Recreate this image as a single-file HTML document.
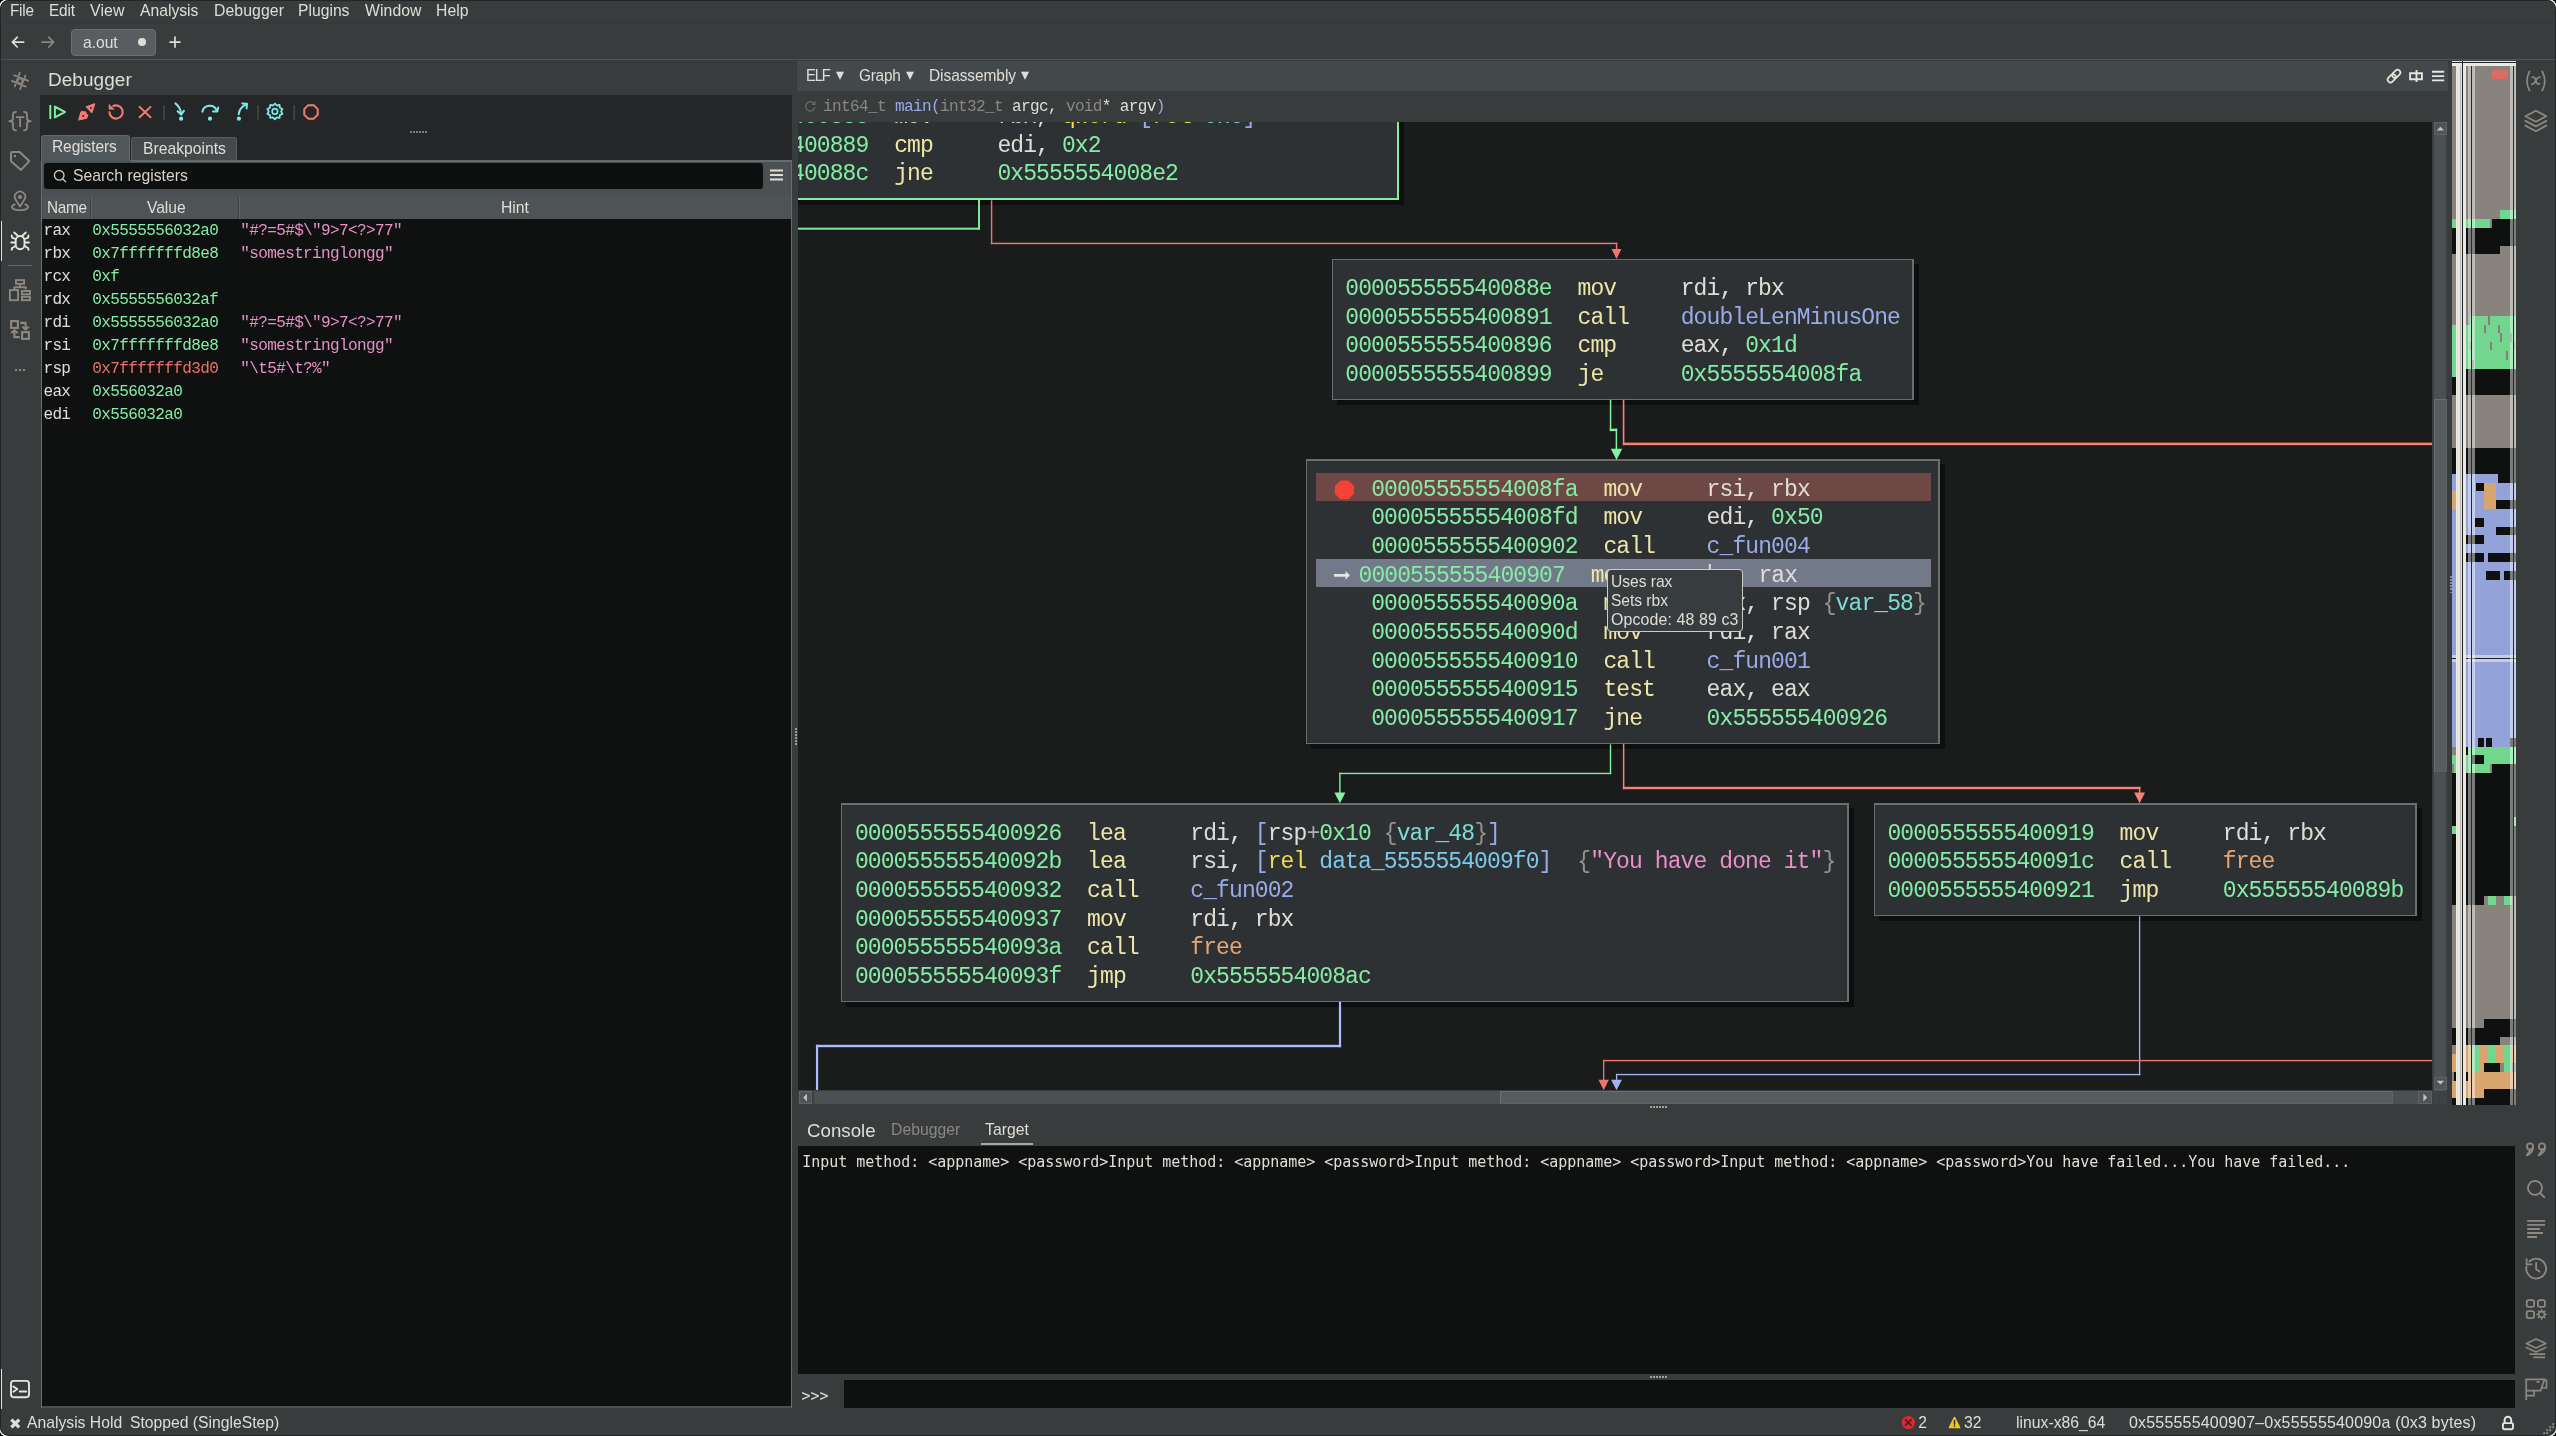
<!DOCTYPE html>
<html lang="en"><head><meta charset="utf-8"><title>Binary Ninja - a.out</title>
<style>
html,body{margin:0;padding:0;background:#000;overflow:hidden}
#app{will-change:transform;position:relative;width:2556px;height:1436px;background:#383c3d;overflow:hidden;border-radius:8.5px;box-shadow:0 0 0 1.4px #fff;font-family:"Liberation Sans",sans-serif;}
#app div{position:absolute;box-sizing:border-box}
#app svg{position:absolute;overflow:visible}
.t{white-space:pre;line-height:20px;height:20px;font-family:"Liberation Sans",sans-serif}
.m{white-space:pre;line-height:28px;height:28px;font-family:"Liberation Mono",monospace;color:#e0dcd6}
.d{letter-spacing:-0.031px;white-space:pre;line-height:28px;height:28px;font-family:"DejaVu Sans Mono","Liberation Mono",monospace;color:#e0dcd6}
</style></head><body><div id="app">

<div style="left:0px;top:22.9px;width:2556px;height:1.1px;background:#33383a;"></div>
<div style="left:0px;top:59px;width:2556px;height:1px;background:#4f5556;"></div>
<div class="t" style="left:10.30px;top:0.56px;font-size:15.7px;color:#e0dcd6;letter-spacing:-0.219px;transform:scaleX(0.9740);transform-origin:0 50%;">File</div>
<div class="t" style="left:49.00px;top:0.56px;font-size:15.7px;color:#e0dcd6;letter-spacing:-0.177px;transform:scaleX(0.9804);transform-origin:0 50%;">Edit</div>
<div class="t" style="left:90.00px;top:0.56px;font-size:15.7px;color:#e0dcd6;letter-spacing:0.125px;transform:scaleX(1.0111);transform-origin:0 50%;">View</div>
<div class="t" style="left:139.50px;top:0.56px;font-size:15.7px;color:#e0dcd6;letter-spacing:0.003px;transform:scaleX(1.0004);transform-origin:0 50%;">Analysis</div>
<div class="t" style="left:213.50px;top:0.56px;font-size:15.7px;color:#e0dcd6;letter-spacing:0.075px;transform:scaleX(1.0076);transform-origin:0 50%;">Debugger</div>
<div class="t" style="left:298.00px;top:0.56px;font-size:15.7px;color:#e0dcd6;letter-spacing:0.001px;transform:scaleX(1.0001);transform-origin:0 50%;">Plugins</div>
<div class="t" style="left:364.50px;top:0.56px;font-size:15.7px;color:#e0dcd6;letter-spacing:0.066px;transform:scaleX(1.0059);transform-origin:0 50%;">Window</div>
<div class="t" style="left:436.00px;top:0.56px;font-size:15.7px;color:#e0dcd6;letter-spacing:0.035px;transform:scaleX(1.0033);transform-origin:0 50%;">Help</div>
<svg style="left:0;top:23px" width="200" height="36" viewBox="0 23 200 36" fill="none" stroke-linecap="round" stroke-linejoin="round"><path d="M23.700 42.100H12.800M17.300 37.200L12.400 42.100l4.900 4.900" stroke="#e0dcd6" stroke-width="1.7"/><path d="M42 42.100h11.300M48.700 37.200L53.600 42.100l-4.900 4.900" stroke="#8c8781" stroke-width="1.7"/><path d="M170 42.100h10M175 37.100v10" stroke="#e0dcd6" stroke-width="1.7"/></svg>
<div style="left:71px;top:29px;width:85px;height:27px;background:#585e60;border:1px solid #6a7072;border-radius:4px;"></div>
<div class="t" style="left:83.10px;top:32.76px;font-size:15.7px;color:#e0dcd6;letter-spacing:-0.027px;transform:scaleX(0.9970);transform-origin:0 50%;">a.out</div>
<div style="left:137.5px;top:38px;width:8px;height:8px;background:#e0dcd6;border-radius:4px;"></div>
<div style="left:0px;top:221px;width:2.1px;height:40px;background:#e6e2dc;"></div>
<div style="left:8px;top:265px;width:24px;height:1px;background:#6a6864;"></div>
<div style="left:0px;top:1369px;width:2.1px;height:40px;background:#e6e2dc;"></div>
<div class="t" style="left:48.00px;top:69.85px;font-size:18.9px;color:#e0dcd6;letter-spacing:0.056px;transform:scaleX(1.0047);transform-origin:0 50%;">Debugger</div>
<div style="left:40px;top:95px;width:752.5px;height:66px;background:#242628;"></div>
<div style="left:410px;top:131px;width:2.1px;height:2.1px;background:#7c7c7a;"></div>
<div style="left:413px;top:131px;width:2.1px;height:2.1px;background:#7c7c7a;"></div>
<div style="left:416px;top:131px;width:2.1px;height:2.1px;background:#7c7c7a;"></div>
<div style="left:419px;top:131px;width:2.1px;height:2.1px;background:#7c7c7a;"></div>
<div style="left:422px;top:131px;width:2.1px;height:2.1px;background:#7c7c7a;"></div>
<div style="left:425px;top:131px;width:2.1px;height:2.1px;background:#7c7c7a;"></div>
<div style="left:41px;top:160px;width:751.2px;height:1248px;background:#4b5153;"></div>
<div style="left:42.2px;top:219px;width:748.4px;height:1187px;background:#0f1111;"></div>
<div style="left:790.7px;top:160px;width:1.5px;height:1248px;background:#686d6f;"></div>
<div style="left:130.5px;top:159.8px;width:661.7px;height:1.8px;background:#666b6d;"></div>
<div style="left:41px;top:160px;width:1.2px;height:1248px;background:#6a6f71;"></div>
<div style="left:41px;top:135px;width:89px;height:26px;background:#50575a;border:1px solid #61676a;border-bottom:none;border-radius:3px 3px 0 0;"></div>
<div style="left:130.7px;top:137px;width:106.8px;height:23px;background:#45494b;border:1px solid #585e60;border-bottom:none;border-radius:3px 3px 0 0;"></div>
<div class="t" style="left:51.80px;top:137.36px;font-size:15.7px;color:#e0dcd6;letter-spacing:-0.095px;transform:scaleX(0.9886);transform-origin:0 50%;">Registers</div>
<div class="t" style="left:143.00px;top:139.06px;font-size:15.7px;color:#e0dcd6;letter-spacing:0.005px;transform:scaleX(1.0006);transform-origin:0 50%;">Breakpoints</div>
<div style="left:43.5px;top:162.5px;width:719px;height:26px;background:#0e1010;border-radius:3px;"></div>
<svg style="left:52px;top:168px" width="16" height="16" viewBox="0 0 16 16" fill="none" stroke="#cbc7c1" stroke-width="1.35" stroke-linecap="round"><circle cx="7.2" cy="7.3" r="4.8"/><path d="M10.8 10.9L13.600 13.700"/></svg>
<div class="t" style="left:72.80px;top:165.66px;font-size:15.7px;color:#d6d2cc;letter-spacing:0.023px;transform:scaleX(1.0031);transform-origin:0 50%;">Search registers</div>
<svg style="left:770px;top:169px" width="13" height="12" viewBox="0 0 13 12" stroke="#e0dcd6" stroke-width="1.8"><path d="M0 1.5h13M0 6h13M0 10.5h13"/></svg>
<div style="left:43px;top:196px;width:747px;height:22.5px;background:#4e5456;"></div>
<div style="left:90px;top:196px;width:1px;height:22.5px;background:#3f4446;"></div>
<div style="left:91px;top:196px;width:1px;height:22.5px;background:#5d6365;"></div>
<div style="left:237.7px;top:196px;width:1px;height:22.5px;background:#3f4446;"></div>
<div style="left:238.7px;top:196px;width:1px;height:22.5px;background:#5d6365;"></div>
<div class="t" style="left:47.40px;top:197.56px;font-size:15.7px;color:#e0dcd6;letter-spacing:-0.317px;transform:scaleX(0.9773);transform-origin:0 50%;">Name</div>
<div class="t" style="left:146.50px;top:197.56px;font-size:15.7px;color:#e0dcd6;letter-spacing:-0.048px;transform:scaleX(0.9950);transform-origin:0 50%;">Value</div>
<div class="t" style="left:500.50px;top:197.56px;font-size:15.7px;color:#e0dcd6;letter-spacing:0.014px;transform:scaleX(1.0015);transform-origin:0 50%;">Hint</div>
<div class="m" style="left:43.40px;top:216.63px;font-size:16.05px;letter-spacing:-0.630px;"><span style="color:#e0dcd6">rax</span></div>
<div class="m" style="left:92.30px;top:216.63px;font-size:16.05px;letter-spacing:-0.630px;"><span style="color:#84eca4">0x5555556032a0</span></div>
<div class="m" style="left:240.20px;top:217.13px;font-size:16.05px;letter-spacing:-0.630px;"><span style="color:#e890c8">&quot;#?=5#$\&quot;9&gt;7&lt;?&gt;77&quot;</span></div>
<div class="m" style="left:43.40px;top:239.63px;font-size:16.05px;letter-spacing:-0.630px;"><span style="color:#e0dcd6">rbx</span></div>
<div class="m" style="left:92.30px;top:239.63px;font-size:16.05px;letter-spacing:-0.630px;"><span style="color:#84eca4">0x7fffffffd8e8</span></div>
<div class="m" style="left:240.20px;top:240.13px;font-size:16.05px;letter-spacing:-0.630px;"><span style="color:#e890c8">&quot;somestringlongg&quot;</span></div>
<div class="m" style="left:43.40px;top:262.63px;font-size:16.05px;letter-spacing:-0.630px;"><span style="color:#e0dcd6">rcx</span></div>
<div class="m" style="left:92.30px;top:262.63px;font-size:16.05px;letter-spacing:-0.630px;"><span style="color:#84eca4">0xf</span></div>
<div class="m" style="left:43.40px;top:285.63px;font-size:16.05px;letter-spacing:-0.630px;"><span style="color:#e0dcd6">rdx</span></div>
<div class="m" style="left:92.30px;top:285.63px;font-size:16.05px;letter-spacing:-0.630px;"><span style="color:#84eca4">0x5555556032af</span></div>
<div class="m" style="left:43.40px;top:308.63px;font-size:16.05px;letter-spacing:-0.630px;"><span style="color:#e0dcd6">rdi</span></div>
<div class="m" style="left:92.30px;top:308.63px;font-size:16.05px;letter-spacing:-0.630px;"><span style="color:#84eca4">0x5555556032a0</span></div>
<div class="m" style="left:240.20px;top:309.13px;font-size:16.05px;letter-spacing:-0.630px;"><span style="color:#e890c8">&quot;#?=5#$\&quot;9&gt;7&lt;?&gt;77&quot;</span></div>
<div class="m" style="left:43.40px;top:331.63px;font-size:16.05px;letter-spacing:-0.630px;"><span style="color:#e0dcd6">rsi</span></div>
<div class="m" style="left:92.30px;top:331.63px;font-size:16.05px;letter-spacing:-0.630px;"><span style="color:#84eca4">0x7fffffffd8e8</span></div>
<div class="m" style="left:240.20px;top:332.13px;font-size:16.05px;letter-spacing:-0.630px;"><span style="color:#e890c8">&quot;somestringlongg&quot;</span></div>
<div class="m" style="left:43.40px;top:354.63px;font-size:16.05px;letter-spacing:-0.630px;"><span style="color:#e0dcd6">rsp</span></div>
<div class="m" style="left:92.30px;top:354.63px;font-size:16.05px;letter-spacing:-0.630px;"><span style="color:#ef6f67">0x7fffffffd3d0</span></div>
<div class="m" style="left:240.20px;top:355.13px;font-size:16.05px;letter-spacing:-0.630px;"><span style="color:#e890c8">&quot;\t5#\t?%&quot;</span></div>
<div class="m" style="left:43.40px;top:377.63px;font-size:16.05px;letter-spacing:-0.630px;"><span style="color:#e0dcd6">eax</span></div>
<div class="m" style="left:92.30px;top:377.63px;font-size:16.05px;letter-spacing:-0.630px;"><span style="color:#84eca4">0x556032a0</span></div>
<div class="m" style="left:43.40px;top:400.63px;font-size:16.05px;letter-spacing:-0.630px;"><span style="color:#e0dcd6">edi</span></div>
<div class="m" style="left:92.30px;top:400.63px;font-size:16.05px;letter-spacing:-0.630px;"><span style="color:#84eca4">0x556032a0</span></div>
<div style="left:792px;top:60px;width:6px;height:1348px;background:#383c3d;"></div>
<div style="left:795px;top:728px;width:2.2px;height:2px;background:#9a9a98;"></div>
<div style="left:795px;top:731px;width:2.2px;height:2px;background:#9a9a98;"></div>
<div style="left:795px;top:734px;width:2.2px;height:2px;background:#9a9a98;"></div>
<div style="left:795px;top:737px;width:2.2px;height:2px;background:#9a9a98;"></div>
<div style="left:795px;top:740px;width:2.2px;height:2px;background:#9a9a98;"></div>
<div style="left:795px;top:743px;width:2.2px;height:2px;background:#9a9a98;"></div>
<div style="left:798px;top:121px;width:1634px;height:969px;background:#1a1c1c;"></div>
<div style="left:798px;top:121px;width:1634px;height:969px;overflow:hidden"><div style="left:-798px;top:-121px;width:2556px;height:1436px">
<div style="left:405px;top:65px;width:999px;height:140.1px;background:#0d0f0f;"></div>
<div style="left:400px;top:60px;width:999px;height:140.1px;background:#2d3133;border:2.3px solid #84eda4;"></div>
<div class="m" style="left:662.00px;top:103.28px;font-size:23.01px;letter-spacing:-0.903px;"><span style="color:#84eca4">0000555555400885</span>  <span style="color:#ede6a6">mov     </span><span style="color:#e0dcd6">rbx, </span><span style="color:#f0dc50">qword </span><span style="color:#9aaae8">[</span><span style="color:#f0dc50">rel </span><span style="color:#7cdcd6">one</span><span style="color:#9aaae8">]</span></div>
<div class="m" style="left:662.00px;top:132.08px;font-size:23.01px;letter-spacing:-0.903px;"><span style="color:#84eca4">0000555555400889</span>  <span style="color:#ede6a6">cmp     </span><span style="color:#e0dcd6">edi, </span><span style="color:#84eca4">0x2</span></div>
<div class="m" style="left:662.00px;top:160.28px;font-size:23.01px;letter-spacing:-0.903px;"><span style="color:#84eca4">000055555540088c</span>  <span style="color:#ede6a6">jne     </span><span style="color:#84eca4">0x5555554008e2</span></div>
<div style="left:1336.6px;top:263.8px;width:582.5px;height:141.3px;background:#0d0f0f;"></div>
<div style="left:1331.6px;top:258.8px;width:582.5px;height:141.3px;background:#2d3133;border:solid #6b6d6e;border-width:1.5px 2px 1.3px 1.3px;"></div>
<div class="m" style="left:1345.30px;top:274.98px;font-size:23.01px;letter-spacing:-0.903px;"><span style="color:#84eca4">000055555540088e</span>  <span style="color:#ede6a6">mov     </span><span style="color:#e0dcd6">rdi, rbx</span></div>
<div class="m" style="left:1345.30px;top:303.88px;font-size:23.01px;letter-spacing:-0.903px;"><span style="color:#84eca4">0000555555400891</span>  <span style="color:#ede6a6">call    </span><span style="color:#9aaae8">doubleLenMinusOne</span></div>
<div class="m" style="left:1345.30px;top:331.98px;font-size:23.01px;letter-spacing:-0.903px;"><span style="color:#84eca4">0000555555400896</span>  <span style="color:#ede6a6">cmp     </span><span style="color:#e0dcd6">eax, </span><span style="color:#84eca4">0x1d</span></div>
<div class="m" style="left:1345.30px;top:360.98px;font-size:23.01px;letter-spacing:-0.903px;"><span style="color:#84eca4">0000555555400899</span>  <span style="color:#ede6a6">je      </span><span style="color:#84eca4">0x5555554008fa</span></div>
<div style="left:1310.7px;top:464.1px;width:634.4px;height:285.1px;background:#0d0f0f;"></div>
<div style="left:1305.7px;top:459.1px;width:634.4px;height:285.1px;background:#2d3133;border:solid #6b6d6e;border-width:2px 2px 1.3px 1.3px;"></div>
<div style="left:1316px;top:473.1px;width:614.5px;height:27.9px;background:#6e4845;"></div>
<div style="left:1316px;top:559.1px;width:614.5px;height:27.8px;background:#727988;"></div>
<div class="m" style="left:1371.20px;top:476.08px;font-size:23.01px;letter-spacing:-0.903px;"><span style="color:#84eca4">00005555554008fa</span>  <span style="color:#ede6a6">mov     </span><span style="color:#e0dcd6">rsi, rbx</span></div>
<div class="m" style="left:1371.20px;top:504.08px;font-size:23.01px;letter-spacing:-0.903px;"><span style="color:#84eca4">00005555554008fd</span>  <span style="color:#ede6a6">mov     </span><span style="color:#e0dcd6">edi, </span><span style="color:#84eca4">0x50</span></div>
<div class="m" style="left:1371.20px;top:533.08px;font-size:23.01px;letter-spacing:-0.903px;"><span style="color:#84eca4">0000555555400902</span>  <span style="color:#ede6a6">call    </span><span style="color:#9aaae8">c_fun004</span></div>
<div class="m" style="left:1371.20px;top:590.08px;font-size:23.01px;letter-spacing:-0.903px;"><span style="color:#84eca4">000055555540090a</span>  <span style="color:#ede6a6">mov     </span><span style="color:#e0dcd6">rdx, rsp </span><span style="color:#96918a">{</span><span style="color:#7cdcd6">var_58</span><span style="color:#96918a">}</span></div>
<div class="m" style="left:1371.20px;top:619.08px;font-size:23.01px;letter-spacing:-0.903px;"><span style="color:#84eca4">000055555540090d</span>  <span style="color:#ede6a6">mov     </span><span style="color:#e0dcd6">rdi, rax</span></div>
<div class="m" style="left:1371.20px;top:648.08px;font-size:23.01px;letter-spacing:-0.903px;"><span style="color:#84eca4">0000555555400910</span>  <span style="color:#ede6a6">call    </span><span style="color:#9aaae8">c_fun001</span></div>
<div class="m" style="left:1371.20px;top:676.08px;font-size:23.01px;letter-spacing:-0.903px;"><span style="color:#84eca4">0000555555400915</span>  <span style="color:#ede6a6">test    </span><span style="color:#e0dcd6">eax, eax</span></div>
<div class="m" style="left:1371.20px;top:705.08px;font-size:23.01px;letter-spacing:-0.903px;"><span style="color:#84eca4">0000555555400917</span>  <span style="color:#ede6a6">jne     </span><span style="color:#84eca4">0x555555400926</span></div>
<div class="m" style="left:1358.50px;top:562.08px;font-size:23.01px;letter-spacing:-0.903px;"><span style="color:#84eca4">0000555555400907</span>  <span style="color:#ede6a6">mov     </span><span style="color:#e0dcd6">rbx, rax</span></div>
<svg style="left:0;top:0" width="2556" height="1436"><path d="M1333.900 573.900H1345.500V571L1349.900 575.300L1345.500 579.700V576.700H1333.900Z" fill="#e8e4de"/><polygon points="1340.5,480.5 1348.4,480.5 1354,486.1 1354,493.8 1348.4,499.3 1340.5,499.3 1334.9,493.8 1334.9,486.1" fill="#f44336"/></svg>
<div style="left:846.2px;top:808px;width:1007.9px;height:199.3px;background:#0d0f0f;"></div>
<div style="left:841.2px;top:803px;width:1007.9px;height:199.3px;background:#2d3133;border:solid #6b6d6e;border-width:2px 2px 1.3px 1.3px;"></div>
<div class="m" style="left:854.90px;top:819.98px;font-size:23.01px;letter-spacing:-0.903px;"><span style="color:#84eca4">0000555555400926</span>  <span style="color:#ede6a6">lea     </span><span style="color:#e0dcd6">rdi, </span><span style="color:#9aaae8">[</span><span style="color:#e0dcd6">rsp</span><span style="color:#a9b0ae">+</span><span style="color:#84eca4">0x10 </span><span style="color:#96918a">{</span><span style="color:#7cdcd6">var_48</span><span style="color:#96918a">}</span><span style="color:#9aaae8">]</span></div>
<div class="m" style="left:854.90px;top:847.98px;font-size:23.01px;letter-spacing:-0.903px;"><span style="color:#84eca4">000055555540092b</span>  <span style="color:#ede6a6">lea     </span><span style="color:#e0dcd6">rsi, </span><span style="color:#9aaae8">[</span><span style="color:#f0dc50">rel </span><span style="color:#7ec8ea">data_5555554009f0</span><span style="color:#9aaae8">]</span>  <span style="color:#96918a">{</span><span style="color:#e890c8">&quot;You have done it&quot;</span><span style="color:#96918a">}</span></div>
<div class="m" style="left:854.90px;top:876.98px;font-size:23.01px;letter-spacing:-0.903px;"><span style="color:#84eca4">0000555555400932</span>  <span style="color:#ede6a6">call    </span><span style="color:#9aaae8">c_fun002</span></div>
<div class="m" style="left:854.90px;top:905.98px;font-size:23.01px;letter-spacing:-0.903px;"><span style="color:#84eca4">0000555555400937</span>  <span style="color:#ede6a6">mov     </span><span style="color:#e0dcd6">rdi, rbx</span></div>
<div class="m" style="left:854.90px;top:933.98px;font-size:23.01px;letter-spacing:-0.903px;"><span style="color:#84eca4">000055555540093a</span>  <span style="color:#ede6a6">call    </span><span style="color:#eaa56f">free</span></div>
<div class="m" style="left:854.90px;top:962.98px;font-size:23.01px;letter-spacing:-0.903px;"><span style="color:#84eca4">000055555540093f</span>  <span style="color:#ede6a6">jmp     </span><span style="color:#84eca4">0x5555554008ac</span></div>
<div style="left:1878.9px;top:808px;width:543.0px;height:113.2px;background:#0d0f0f;"></div>
<div style="left:1873.9px;top:803px;width:543.0px;height:113.2px;background:#2d3133;border:solid #6b6d6e;border-width:2px 2px 1.3px 1.3px;"></div>
<div class="m" style="left:1887.40px;top:819.98px;font-size:23.01px;letter-spacing:-0.903px;"><span style="color:#84eca4">0000555555400919</span>  <span style="color:#ede6a6">mov     </span><span style="color:#e0dcd6">rdi, rbx</span></div>
<div class="m" style="left:1887.40px;top:847.98px;font-size:23.01px;letter-spacing:-0.903px;"><span style="color:#84eca4">000055555540091c</span>  <span style="color:#ede6a6">call    </span><span style="color:#eaa56f">free</span></div>
<div class="m" style="left:1887.40px;top:876.98px;font-size:23.01px;letter-spacing:-0.903px;"><span style="color:#84eca4">0000555555400921</span>  <span style="color:#ede6a6">jmp     </span><span style="color:#84eca4">0x55555540089b</span></div>
<svg style="left:0;top:0" width="2556" height="1436"><rect x="978.00" y="200.00" width="2" height="29.70" fill="#80e6a0"/><rect x="797.00" y="227.70" width="183.00" height="2" fill="#80e6a0"/><rect x="990.90" y="200.28" width="1.4" height="43.90" fill="#ee766d"/><rect x="990.90" y="242.72" width="626.35" height="1.45" fill="#ee766d"/><rect x="1615.85" y="242.72" width="1.4" height="8.00" fill="#ee766d"/><polygon points="1611.6,249.09999999999997 1621.4,249.09999999999997 1616.5,258.9" fill="#ee766d"/><rect x="1609.80" y="399.80" width="1.5" height="31.30" fill="#86f0a2"/><rect x="1609.80" y="428.70" width="7.35" height="2.4" fill="#86f0a2"/><rect x="1615.65" y="428.70" width="1.5" height="22.50" fill="#86f0a2"/><polygon points="1610.8,448.79999999999995 1622.2,448.79999999999995 1616.5,459.9" fill="#86f0a2"/><rect x="1622.80" y="399.75" width="1.6" height="45.40" fill="#fc7f75"/><rect x="1622.80" y="442.65" width="810.50" height="2.5" fill="#fc7f75"/><rect x="1609.80" y="744.33" width="1.4" height="29.80" fill="#86f0a2"/><rect x="1339.20" y="772.78" width="272.00" height="1.35" fill="#86f0a2"/><rect x="1339.20" y="772.78" width="1.4" height="20.90" fill="#86f0a2"/><polygon points="1334.4,792.4000000000001 1345.4,792.4000000000001 1339.9,803.2" fill="#86f0a2"/><rect x="1622.90" y="743.80" width="1.5" height="45.40" fill="#fc7f75"/><rect x="1622.90" y="786.80" width="517.45" height="2.4" fill="#fc7f75"/><rect x="2138.85" y="786.80" width="1.5" height="8.40" fill="#fc7f75"/><polygon points="2134.1,792.4000000000001 2145.1,792.4000000000001 2139.6,803.2" fill="#fc7f75"/><rect x="1338.90" y="1001.80" width="2.2" height="45.40" fill="#aabbff"/><rect x="815.95" y="1044.80" width="525.15" height="2.4" fill="#aabbff"/><rect x="815.95" y="1044.80" width="2.2" height="47.40" fill="#aabbff"/><rect x="2138.95" y="916.33" width="1.3" height="158.90" fill="#a3b3ee"/><rect x="1615.95" y="1073.88" width="524.30" height="1.35" fill="#a3b3ee"/><rect x="1615.95" y="1073.88" width="1.3" height="7.80" fill="#a3b3ee"/><polygon points="1611.1,1079.8 1621.9,1079.8 1616.5,1090.2" fill="#a3b3ee"/><rect x="1603.00" y="1059.90" width="830.15" height="1.4" fill="#ee766d"/><rect x="1603.00" y="1059.90" width="1.3" height="21.80" fill="#ee766d"/><polygon points="1598.5,1079.8 1608.9,1079.8 1603.7,1090.2" fill="#ee766d"/></svg>
<div style="left:1607px;top:568.8px;width:136.3px;height:63.4px;background:#373c3e;border:1px solid #cfcbc5;border-radius:4px;"></div>
</div></div>
<div class="t" style="left:1610.90px;top:571.86px;font-size:15.7px;color:#e0dcd6;letter-spacing:-0.039px;transform:scaleX(0.9956);transform-origin:0 50%;">Uses rax</div>
<div class="t" style="left:1610.90px;top:590.86px;font-size:15.7px;color:#e0dcd6;letter-spacing:-0.042px;transform:scaleX(0.9949);transform-origin:0 50%;">Sets rbx</div>
<div class="t" style="left:1610.90px;top:609.86px;font-size:15.7px;color:#e0dcd6;letter-spacing:0.118px;transform:scaleX(1.0143);transform-origin:0 50%;">Opcode: 48 89 c3</div>
<div style="left:797px;top:61px;width:1651px;height:30px;background:#43484a;"></div>
<div style="left:797px;top:91px;width:1651px;height:30.7px;background:#383c3d;"></div>
<div class="t" style="left:805.60px;top:65.56px;font-size:15.7px;color:#e0dcd6;letter-spacing:-1.257px;transform:scaleX(0.9400);transform-origin:0 50%;">ELF</div>
<div class="t" style="left:858.70px;top:65.56px;font-size:15.7px;color:#e0dcd6;letter-spacing:-0.231px;transform:scaleX(0.9788);transform-origin:0 50%;">Graph</div>
<div class="t" style="left:928.90px;top:65.56px;font-size:15.7px;color:#e0dcd6;letter-spacing:-0.095px;transform:scaleX(0.9893);transform-origin:0 50%;">Disassembly</div>
<div class="t" style="left:835.70px;top:65.36px;font-size:15.7px;color:#e0dcd6;font-family:"DejaVu Sans",sans-serif;">▾</div>
<div class="t" style="left:905.90px;top:65.36px;font-size:15.7px;color:#e0dcd6;font-family:"DejaVu Sans",sans-serif;">▾</div>
<div class="t" style="left:1021.40px;top:65.36px;font-size:15.7px;color:#e0dcd6;font-family:"DejaVu Sans",sans-serif;">▾</div>
<div class="m" style="left:823.10px;top:92.73px;font-size:16.05px;letter-spacing:-0.630px;"><span style="color:#8c8781">int64_t </span><span style="color:#9aaae8">main</span><span style="color:#9aaae8">(</span><span style="color:#8c8781">int32_t </span><span style="color:#e0dcd6">argc, </span><span style="color:#8c8781">void</span><span style="color:#e0dcd6">* argv</span><span style="color:#9aaae8">)</span></div>
<div style="left:2433px;top:121.5px;width:14.2px;height:969px;background:#3a3f40;"></div>
<div style="left:2433.8px;top:121.5px;width:12.6px;height:969px;background:#4b5051;"></div>
<div style="left:2434px;top:399px;width:12.8px;height:372.5px;background:#575c5e;border:1px solid #6a6f71;border-right-color:#5d6264;border-bottom-color:#5d6264;"></div>
<div style="left:2434px;top:122.3px;width:12.8px;height:12.4px;background:#4f5456;border:1px solid #5e6365;"></div>
<div style="left:2434px;top:1076.5px;width:12.8px;height:13px;background:#4f5456;border:1px solid #5e6365;"></div>
<div style="left:798px;top:1090.7px;width:1634.8px;height:13.4px;background:#3a3f40;"></div>
<div style="left:814px;top:1091.4px;width:1604px;height:12.2px;background:#4b5051;"></div>
<div style="left:1499.8px;top:1091px;width:893.6px;height:12.9px;background:#575c5e;border:1px solid #6a6f71;border-right-color:#5d6264;border-bottom-color:#5d6264;"></div>
<div style="left:798.5px;top:1091px;width:13.5px;height:12.9px;background:#4f5456;border:1px solid #5e6365;"></div>
<div style="left:2418.2px;top:1091px;width:13.8px;height:12.9px;background:#4f5456;border:1px solid #5e6365;"></div>
<div style="left:2433px;top:1090.7px;width:14.2px;height:13.4px;background:#3d4244;"></div>
<div style="left:2449.8px;top:576.2px;width:2.1px;height:1.9px;background:#8e8e8a;"></div>
<div style="left:2449.8px;top:579.26px;width:2.1px;height:1.9px;background:#8e8e8a;"></div>
<div style="left:2449.8px;top:582.32px;width:2.1px;height:1.9px;background:#8e8e8a;"></div>
<div style="left:2449.8px;top:585.38px;width:2.1px;height:1.9px;background:#8e8e8a;"></div>
<div style="left:2449.8px;top:588.44px;width:2.1px;height:1.9px;background:#8e8e8a;"></div>
<div style="left:2449.8px;top:591.5px;width:2.1px;height:1.9px;background:#8e8e8a;"></div>
<div class="t" style="left:807.40px;top:1120.76px;font-size:18.6px;color:#e0dcd6;letter-spacing:0.038px;transform:scaleX(1.0034);transform-origin:0 50%;">Console</div>
<div class="t" style="left:891.40px;top:1120.36px;font-size:15.7px;color:#8c8781;letter-spacing:0.032px;transform:scaleX(1.0033);transform-origin:0 50%;">Debugger</div>
<div class="t" style="left:985.00px;top:1120.36px;font-size:15.7px;color:#e0dcd6;letter-spacing:0.027px;transform:scaleX(1.0031);transform-origin:0 50%;">Target</div>
<div style="left:981.4px;top:1143px;width:51.3px;height:1.7px;background:#aaa6a0;"></div>
<div style="left:798px;top:1146px;width:1717px;height:228px;background:#0f1111;"></div>
<div class="d" style="left:802.30px;top:1148.01px;font-size:15.00px;">Input method: &lt;appname&gt; &lt;password&gt;Input method: &lt;appname&gt; &lt;password&gt;Input method: &lt;appname&gt; &lt;password&gt;Input method: &lt;appname&gt; &lt;password&gt;You have failed...You have failed...</div>
<div style="left:1650px;top:1106px;width:2.1px;height:2px;background:#a0a09e;"></div>
<div style="left:1650px;top:1376px;width:2.1px;height:2px;background:#a0a09e;"></div>
<div style="left:1653px;top:1106px;width:2.1px;height:2px;background:#a0a09e;"></div>
<div style="left:1653px;top:1376px;width:2.1px;height:2px;background:#a0a09e;"></div>
<div style="left:1656px;top:1106px;width:2.1px;height:2px;background:#a0a09e;"></div>
<div style="left:1656px;top:1376px;width:2.1px;height:2px;background:#a0a09e;"></div>
<div style="left:1659px;top:1106px;width:2.1px;height:2px;background:#a0a09e;"></div>
<div style="left:1659px;top:1376px;width:2.1px;height:2px;background:#a0a09e;"></div>
<div style="left:1662px;top:1106px;width:2.1px;height:2px;background:#a0a09e;"></div>
<div style="left:1662px;top:1376px;width:2.1px;height:2px;background:#a0a09e;"></div>
<div style="left:1665px;top:1106px;width:2.1px;height:2px;background:#a0a09e;"></div>
<div style="left:1665px;top:1376px;width:2.1px;height:2px;background:#a0a09e;"></div>
<div class="d" style="left:801.60px;top:1382.01px;font-size:15.00px;">&gt;&gt;&gt;</div>
<div style="left:844px;top:1380px;width:1671px;height:28px;background:#0f1111;"></div>
<div class="t" style="left:9.20px;top:1413.64px;font-size:14.6px;color:#e0dcd6;">✖</div>
<div class="t" style="left:27.30px;top:1413.16px;font-size:15.7px;color:#e0dcd6;letter-spacing:0.004px;transform:scaleX(1.0005);transform-origin:0 50%;">Analysis Hold</div>
<div class="t" style="left:130.00px;top:1413.16px;font-size:15.7px;color:#e0dcd6;letter-spacing:0.002px;transform:scaleX(1.0002);transform-origin:0 50%;">Stopped (SingleStep)</div>
<div class="t" style="left:1918.30px;top:1413.16px;font-size:15.7px;color:#e0dcd6;">2</div>
<div class="t" style="left:1964.20px;top:1413.16px;font-size:15.7px;color:#e0dcd6;letter-spacing:0.020px;transform:scaleX(1.0011);transform-origin:0 50%;">32</div>
<div class="t" style="left:2015.80px;top:1413.16px;font-size:15.7px;color:#e0dcd6;letter-spacing:0.017px;transform:scaleX(1.0021);transform-origin:0 50%;">linux-x86_64</div>
<div class="t" style="left:2129.00px;top:1413.16px;font-size:15.7px;color:#e0dcd6;letter-spacing:0.172px;transform:scaleX(1.0206);transform-origin:0 50%;">0x555555400907–0x55555540090a (0x3 bytes)</div>
<svg style="left:0;top:0" width="400" height="140" fill="none" stroke-linecap="round" stroke-linejoin="round"><path d="M50.3 105.8V118.2M54.9 106.6L64.9 112L54.9 117.4Z" stroke="#7df0a0" stroke-width="2"/><g fill="#f47c73" stroke="#f47c73" stroke-width="1.2"><path d="M86.3 106.8L94.7 103.9L91.9 112.6Z"/><path d="M78.8 120L80.9 112.3L82.6 111.2L83.6 112.4L85 111.6L86.2 113L85.4 114.2L86.6 114.4L87.8 115.3L86.4 118.2Z"/></g><circle cx="90.9" cy="107.9" r="1" fill="#242628"/><circle cx="83.3" cy="115.9" r="1" fill="#242628"/><path d="M109.5 111.4A6.6 6.6 0 1 0 112.6 106.4" stroke="#f47c73" stroke-width="2.1" stroke-linecap="butt"/><path d="M109 104.6V109.3H113.9Z" fill="#f47c73" stroke="#f47c73" stroke-width=".6"/><path d="M139.6 106.9L150.5 117.3M150.5 106.9L139.6 117.3" stroke="#f47c73" stroke-width="2"/><path d="M164.1 105.8V119" stroke="#3e4648" stroke-width="1.8"/><path d="M258 105.8V119" stroke="#3e4648" stroke-width="1.8"/><path d="M294.2 105.8V119" stroke="#3e4648" stroke-width="1.8"/><path d="M175.4 103.4Q180.6 107.5 181 113.6" stroke="#7fe9e6" stroke-width="2"/><path d="M177.6 111.3L181.1 114.6L184 110.7" stroke="#7fe9e6" stroke-width="2"/><circle cx="181.1" cy="118.7" r="2.1" fill="#7fe9e6"/><path d="M202.4 111.8A7.4 7.4 0 0 1 216.6 110.6" stroke="#7fe9e6" stroke-width="2"/><path d="M213 111.4L217.2 111.6L218.2 107.4" stroke="#7fe9e6" stroke-width="2"/><circle cx="210" cy="118.7" r="2.1" fill="#7fe9e6"/><path d="M238.7 114.2Q239.5 107.6 246 104.4" stroke="#7fe9e6" stroke-width="2"/><path d="M242.2 103.4L247 103.8L246.6 108.4" stroke="#7fe9e6" stroke-width="2"/><circle cx="238.9" cy="118.7" r="2.1" fill="#7fe9e6"/><path d="M274.90 103.50L276.82 105.50L279.54 105.01L279.92 107.76L282.41 108.96L281.10 111.40L282.41 113.84L279.92 115.04L279.54 117.79L276.82 117.30L274.90 119.30L272.98 117.30L270.26 117.79L269.88 115.04L267.39 113.84L268.70 111.40L267.39 108.96L269.88 107.76L270.26 105.01L272.98 105.50Z" stroke="#7fe9e6" stroke-width="1.8" stroke-linejoin="round"/><circle cx="274.9" cy="111.4" r="2.7" stroke="#7fe9e6" stroke-width="1.7"/><path d="M317.74 114.69L313.79 118.64L308.21 118.64L304.26 114.69L304.26 109.11L308.21 105.16L313.79 105.16L317.74 109.11Z" stroke="#f47c73" stroke-width="2"/></svg><svg style="left:0;top:0" width="42" height="1436" fill="none" stroke-linecap="round" stroke-linejoin="round"><g stroke="#8d8881" stroke-width="1.7"><path d="M19.8 72.6L14.7 86.4M25.5 75.5L20.1 89.2M14.2 75.2L28.2 80.9M11.8 80.9L25.8 86.6"/><circle cx="20" cy="80.9" r="2.2" stroke-width="1.3"/></g><g stroke="#8d8881" stroke-width="1.8"><path d="M16 111.8Q13 111.8 13 114.5V118.6Q13 121.1 9.3 121.1Q13 121.1 13 123.6V127.7Q13 130.4 16 130.4M24 111.8Q27 111.8 27 114.5V118.6Q27 121.1 30.7 121.1Q27 121.1 27 123.6V127.7Q27 130.4 24 130.4"/><path d="M16 117.1H24.3M20.1 117.1V126.9" stroke-linecap="butt"/></g><path d="M12.4 152H19.6L29.3 161.1L21 169.9L11 161.3V153.4Q11 152 12.4 152Z" stroke="#8d8881" stroke-width="2"/><rect x="13.9" y="155" width="2.1" height="2.1" fill="#8d8881"/><path d="M20 206.5L15.6 199.6A5.2 5.2 0 1 1 24.4 199.6Z" stroke="#8d8881" stroke-width="1.8"/><circle cx="20" cy="197" r="2.1" fill="#8d8881"/><path d="M14.8 204.4C9 206.5 12.5 210.2 20 210.2C27.500 210.2 31 206.5 25.2 204.4" stroke="#8d8881" stroke-width="1.8"/><g stroke="#e8e4de" stroke-width="1.9"><rect x="15.7" y="236" width="8.8" height="13.3" rx="4.4" ry="4.8"/><path d="M14.3 232.5L17.7 235.8M25.8 232.5L22.4 235.8M15.4 239L12.1 237.6L11.7 235.4M11.2 242.5H15.2M15.4 246.2L12.1 248L11.7 249.7M24.8 239L28.1 237.6L28.5 235.4M29 242.5H25M24.8 246.2L28.1 248L28.500 249.700"/></g><g stroke="#8d8881" stroke-width="1.9" stroke-linejoin="miter" stroke-linecap="butt"><rect x="16" y="280.1" width="8.100" height="3.700"/><path d="M20.1 284V287.200M14.4 289.200V287.200H25.700V289.500"/><rect x="9.900" y="290.100" width="8.100" height="10.100"/><rect x="21.900" y="291" width="8" height="3.300"/><rect x="21.900" y="296.800" width="8" height="3.400"/></g><g stroke="#8d8881" stroke-width="2.1" stroke-linejoin="miter" stroke-linecap="butt"><rect x="11.100" y="321.100" width="6.800" height="6.800"/><rect x="22.100" y="332.100" width="6.800" height="6.800"/><path d="M20.200 322.900H25.600V329M22.300 326.700L25.600 329.400L28.900 326.700M19.800 337.100H14.400V331M11.100 333L14.400 330.300L17.700 333"/></g><rect x="15" y="369" width="2.1" height="2.1" fill="#8d8881"/><rect x="19" y="369" width="2.1" height="2.1" fill="#8d8881"/><rect x="23" y="369" width="2.1" height="2.1" fill="#8d8881"/><g stroke="#e8e4de" stroke-width="1.9"><rect x="11" y="1380.900" width="18" height="16.300" rx="2.6"/><path d="M13.400 1386.600L17.300 1389L13.400 1391.700M19.700 1391.500H26.200"/></g></svg><svg style="left:0;top:0" width="2556" height="1436" fill="none" stroke-linecap="round" stroke-linejoin="round"><g stroke="#e8e4de" stroke-width="1.7" transform="rotate(-45 2394 76.1)"><rect x="2386.200" y="73.300" width="9.200" height="5.600" rx="2.800"/><rect x="2392.600" y="73.300" width="9.200" height="5.600" rx="2.800"/></g><g stroke="#e8e4de" stroke-width="1.9" stroke-linejoin="miter" stroke-linecap="butt"><path d="M2416.500 73.200H2410.100V79.200H2416.500M2416.500 70V82.100M2416.500 73.200H2421.900V79.200H2416.500"/></g><path d="M2432 71.800H2444.200M2432 76.100H2444.200M2432 80.400H2444.200" stroke="#e8e4de" stroke-width="1.9" stroke-linecap="butt"/><g stroke="#8d8881" stroke-width="1.7"><path d="M2529.500 71.500Q2524.500 81 2529.500 90.500M2542.300 71.500Q2547.300 81 2542.300 90.500"/><path d="M2532.200 77.300Q2534.600 76 2535.700 80.300Q2536.800 85.400 2539.500 83.600M2540 77Q2537.600 77 2535.800 80.600Q2534 84.400 2531.800 84.200"/></g><g stroke="#8d8881" stroke-width="1.8"><path d="M2535.900 110.700L2546.300 116.200L2535.900 121.700L2525.400 116.200ZM2525.400 120.900L2535.900 126.400L2546.300 120.900M2525.400 125.600L2535.900 131.200L2546.300 125.600"/></g><g stroke="#8d8881" stroke-width="1.800"><circle cx="2530" cy="1146.400" r="3.100"/><path d="M2533.1 1146.800Q2533.2 1152.600 2526.7 1155.500L2530.6 1149.600"/></g><g stroke="#8d8881" stroke-width="1.800"><circle cx="2541.9" cy="1146.400" r="3.100"/><path d="M2545.0 1146.800Q2545.1 1152.600 2538.6 1155.500L2542.5 1149.600"/></g><g stroke="#8d8881" stroke-width="1.8"><circle cx="2535" cy="1187.900" r="7"/><path d="M2540.100 1193L2544.400 1197.400"/></g><path d="M2527.200 1220.800H2545M2527.200 1224.900H2545M2527.200 1229H2540M2527.200 1233H2543M2527.200 1237H2537" stroke="#8d8881" stroke-width="1.8" stroke-linecap="butt"/><g stroke="#8d8881" stroke-width="1.8"><path d="M2526.500 1266.500A9.900 9.900 0 1 0 2529.300 1261.500"/><path d="M2526.600 1259.200V1264.300H2531.600M2536.100 1262.800V1269.300L2539.400 1271.500" /></g><g stroke="#8d8881" stroke-width="1.8"><rect x="2526.700" y="1300.100" width="7.400" height="6.800" rx="1.800"/><rect x="2537.900" y="1300.100" width="7.100" height="6.800" rx="1.800"/><rect x="2526.700" y="1311.200" width="7.400" height="6.900" rx="1.800"/><circle cx="2541.600" cy="1314.400" r="2.900"/><path d="M2541.600 1309.500V1319.300M2536.700 1314.400H2546.500M2538.100 1310.900L2545.100 1317.900M2545.100 1310.900L2538.100 1317.900" stroke-width="1.200"/></g><circle cx="2541.600" cy="1314.400" r="2" fill="#383c3d"/><g stroke="#8d8881" stroke-width="1.700"><path d="M2536 1338.900L2545.800 1343.400L2536 1347.900L2526.400 1343.400ZM2526.400 1347.400L2536 1352L2545.800 1347.400"/><path d="M2529.400 1354.100H2545.100M2533.200 1357.400H2545.100" stroke-linecap="butt"/></g><g stroke="#8d8881" stroke-width="1.700" stroke-linejoin="miter" stroke-linecap="butt"><path d="M2526.200 1400V1379.400H2544.400L2540.600 1390.700H2526.200M2544.600 1380.400H2546.500V1388H2542M2526.200 1395.700H2534V1390.700M2536.500 1381.900H2539.500"/></g><circle cx="1908.300" cy="1422.500" r="6.600" fill="#e0262e"/><path d="M1905.600 1419.800L1911 1425.200M1911 1419.800L1905.600 1425.200" stroke="#2b2f30" stroke-width="1.800"/><path d="M1954.500 1417.400L1959.700 1427.600H1949.300Z" fill="#f0c419" stroke="#f0c419" stroke-width="1.4" /><path d="M1954.500 1420.600V1424.200M1954.500 1426V1426.300" stroke="#2b2f30" stroke-width="1.500"/><g stroke="#e8e4de" stroke-width="1.900"><rect x="2502.900" y="1423.100" width="10.100" height="6.100" rx="1.400"/><path d="M2504.600 1422.600V1420.100A3.300 3.300 0 0 1 2511.200 1420.100V1422.600" stroke-width="2"/></g><rect x="2552.2" y="1423.2" width="2" height="2" fill="#878b8b"/><rect x="2549.2" y="1426.2" width="2" height="2" fill="#878b8b"/><rect x="2552.2" y="1426.2" width="2" height="2" fill="#878b8b"/><rect x="2546.2" y="1429.2" width="2" height="2" fill="#878b8b"/><rect x="2549.2" y="1429.2" width="2" height="2" fill="#878b8b"/><rect x="2543.2" y="1432.2" width="2" height="2" fill="#878b8b"/><rect x="2546.2" y="1432.2" width="2" height="2" fill="#878b8b"/><path d="M2436.600 130.600L2440.400 126.800L2444.200 130.600Z" fill="#c4c0ba"/><path d="M2436.600 1080.800L2440.400 1084.600L2444.200 1080.800Z" fill="#c4c0ba"/><path d="M807 1093.800L803.200 1097.600L807 1101.400Z" fill="#c4c0ba"/><path d="M2423.400 1093.800L2427.200 1097.600L2423.400 1101.400Z" fill="#c4c0ba"/><path d="M2545 0" /><path d="M814.300 104.200A4.600 4.600 0 1 0 814.700 107.700" stroke="#6f6d69" stroke-width="1.200"/><path d="M812.600 104.300H815V101.900" stroke="#6f6d69" stroke-width="1.200"/></svg>
<svg style="left:0;top:0" width="2556" height="1436" shape-rendering="crispEdges"><rect x="2452" y="62" width="64.2" height="1043" fill="#88837c"/><rect x="2492" y="70" width="16" height="9" fill="#d96d64"/><rect x="2500" y="209.7" width="16.2" height="9.4" fill="#72d68f"/><rect x="2452" y="219.1" width="38" height="8.8" fill="#72d68f"/><rect x="2492.2" y="219.1" width="24.0" height="26.9" fill="#0f1111"/><rect x="2452" y="227.9" width="48" height="26.1" fill="#0f1111"/><rect x="2470" y="315.9" width="46.2" height="9.1" fill="#72d68f"/><rect x="2452" y="325" width="64.2" height="43.9" fill="#72d68f"/><rect x="2452" y="368.9" width="8" height="8.3" fill="#72d68f"/><rect x="2460" y="368.9" width="56.2" height="26.1" fill="#0f1111"/><rect x="2452" y="377.2" width="8" height="17.8" fill="#0f1111"/><rect x="2488.1000000000004" y="316.3" width="1.5" height="8.4" fill="#8a7c7c"/><rect x="2484.2000000000003" y="325.3" width="1.5" height="7.3" fill="#8a7c7c"/><rect x="2498.3" y="325.3" width="1.5" height="7.3" fill="#8a7c7c"/><rect x="2500.2000000000003" y="333.4" width="1.5" height="8.2" fill="#8a7c7c"/><rect x="2510.3" y="333.4" width="1.5" height="8.2" fill="#8a7c7c"/><rect x="2490.2000000000003" y="342.3" width="1.5" height="8.1" fill="#8a7c7c"/><rect x="2470.0" y="342.3" width="1.5" height="8.1" fill="#8a7c7c"/><rect x="2506.2000000000003" y="351.1" width="1.5" height="8.4" fill="#8a7c7c"/><rect x="2472.3" y="360.2" width="1.5" height="8.0" fill="#8a7c7c"/><rect x="2513.9" y="342.3" width="1.5" height="8.1" fill="#8a7c7c"/><rect x="2452" y="448.1" width="64.2" height="25.7" fill="#0f1111"/><rect x="2452" y="473.8" width="64.2" height="273.2" fill="#93a3d9"/><rect x="2498" y="473.8" width="18.2" height="8.8" fill="#0f1111"/><rect x="2476.3" y="482.6" width="7.7" height="8.8" fill="#0f1111"/><rect x="2484" y="482.6" width="12" height="26.4" fill="#d9a56f"/><rect x="2452" y="491.4" width="8" height="17.6" fill="#d9a56f"/><rect x="2496" y="500.2" width="20.2" height="8.8" fill="#0f1111"/><rect x="2474.5" y="517.8" width="9.5" height="8.8" fill="#0f1111"/><rect x="2496" y="526.6" width="20.2" height="8.8" fill="#0f1111"/><rect x="2462" y="535.4" width="22" height="8.8" fill="#0f1111"/><rect x="2462" y="553" width="22" height="8.8" fill="#0f1111"/><rect x="2488.1" y="553" width="28.1" height="8.8" fill="#0f1111"/><rect x="2486" y="570.6" width="14" height="9.1" fill="#0f1111"/><rect x="2504" y="570.6" width="12.2" height="9.1" fill="#0f1111"/><rect x="2478.2" y="738" width="5.8" height="9" fill="#0f1111"/><rect x="2486" y="738" width="6.2" height="9" fill="#0f1111"/><rect x="2510" y="738" width="6.2" height="9" fill="#0f1111"/><rect x="2458" y="747" width="10" height="8.3" fill="#0f1111"/><rect x="2468" y="747" width="48.2" height="8.3" fill="#72d68f"/><rect x="2452" y="755.3" width="64.2" height="8.8" fill="#72d68f"/><rect x="2472" y="755.3" width="12" height="8.8" fill="#0f1111"/><rect x="2454" y="764.1" width="36" height="8.9" fill="#72d68f"/><rect x="2492.2" y="764.1" width="24.0" height="8.9" fill="#0f1111"/><rect x="2452" y="773" width="64.2" height="123" fill="#0f1111"/><rect x="2452" y="896" width="32" height="9" fill="#0f1111"/><rect x="2514" y="816.9" width="2.2" height="9.0" fill="#72d68f"/><rect x="2452" y="825.9" width="6" height="8.1" fill="#72d68f"/><rect x="2488" y="896" width="8" height="9" fill="#72d68f"/><rect x="2504" y="896" width="8" height="9" fill="#72d68f"/><rect x="2484" y="1019" width="32.2" height="9.1" fill="#0f1111"/><rect x="2452" y="1028.1" width="64.2" height="8.9" fill="#0f1111"/><rect x="2452" y="1037" width="48" height="7.8" fill="#0f1111"/><rect x="2460" y="1044.8" width="56.2" height="18.0" fill="#d9a56f"/><rect x="2452" y="1053.9" width="8" height="17.9" fill="#d9a56f"/><rect x="2472" y="1044.8" width="8" height="18.0" fill="#72d68f"/><rect x="2488" y="1044.8" width="8" height="18.0" fill="#72d68f"/><rect x="2504" y="1044.8" width="8" height="18.0" fill="#72d68f"/><rect x="2460" y="1062.8" width="12" height="9.0" fill="#d9a56f"/><rect x="2472" y="1062.8" width="8" height="9.0" fill="#72d68f"/><rect x="2480" y="1062.8" width="4" height="9.0" fill="#d9a56f"/><rect x="2484" y="1062.8" width="16" height="9.0" fill="#0f1111"/><rect x="2504" y="1062.8" width="8" height="9.0" fill="#72d68f"/><rect x="2453.5" y="1071.8" width="14.5" height="9.2" fill="#0f1111"/><rect x="2468" y="1071.8" width="48.2" height="9.2" fill="#d9a56f"/><rect x="2452" y="1081" width="64.2" height="8" fill="#d9a56f"/><rect x="2452" y="1089" width="32" height="9" fill="#d9a56f"/><rect x="2484" y="1089" width="32.2" height="9" fill="#0f1111"/><rect x="2452" y="1098" width="64.2" height="7" fill="#0f1111"/><rect x="2452" y="655.4" width="64.2" height="2.2" fill="#fff" fill-opacity=".45"/><rect x="2452" y="659" width="64.2" height="2.6" fill="#fff" fill-opacity=".45"/><rect x="2452" y="657.6" width="64.2" height="1.3" fill="#1e2121"/><rect x="2468" y="66" width="2.8" height="1039" fill="#fff" fill-opacity=".45"/><rect x="2472" y="66" width="3" height="1039" fill="#fff" fill-opacity=".45"/><rect x="2509.8" y="66" width="3.0" height="1039" fill="#fff" fill-opacity=".45"/><rect x="2513.8" y="66" width="2.4" height="1039" fill="#fff" fill-opacity=".45"/><rect x="2470.8" y="66" width="1.2" height="1039" fill="#26292a"/><rect x="2512.8" y="66" width="1.0" height="1039" fill="#26292a"/><rect x="2452" y="61" width="64.2" height="1" fill="#e8e4de"/><rect x="2452" y="62" width="64.2" height="1" fill="#1e2121"/><rect x="2452" y="63" width="64.2" height="3" fill="#ebe7e1"/><rect x="2455.9" y="63" width="6.1" height="1042" fill="#e8e4de"/><rect x="2460" y="66" width="0.7" height="1039" fill="#b9b5af"/><rect x="2462" y="61" width="1" height="1044" fill="#1e2121"/><rect x="2463" y="63" width="3" height="1042" fill="#ebe7e1"/></svg>
<div style="left:0;top:0;width:2556px;height:1436px;border:1px solid #222526;border-radius:8.5px;"></div>
</div></body></html>
